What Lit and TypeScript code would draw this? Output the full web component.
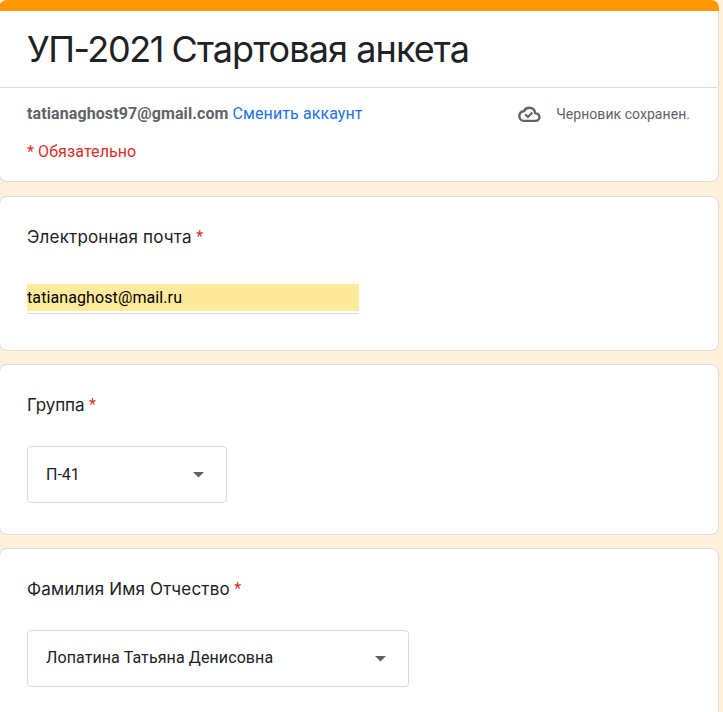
import { LitElement, html, css } from "lit";
import { customElement, property } from "lit/decorators.js";

@customElement("form-select")
class FormSelect extends LitElement {
  @property() value = "";

  static styles = css`
    :host {
      display: flex;
      align-items: center;
      justify-content: space-between;
      box-sizing: border-box;
      height: 57px;
      padding: 0 22px 0 18px;
      border: 1px solid #dadce0;
      border-radius: 4px;
      color: #202124;
      font: 400 16px/24px Roboto, sans-serif;
      letter-spacing: var(--value-spacing, 0);
    }
    span {
      padding-bottom: var(--value-lift, 0);
    }
    svg {
      display: block;
      width: 11px;
      height: 6px;
      margin-top: 1px;
      fill: #5f6368;
    }
  `;

  render() {
    return html`<span>${this.value}</span>
      <svg viewBox="0 0 11 6"><path d="M0 0h11L5.5 5.5z" /></svg>`;
  }
}

@customElement("form-question")
class FormQuestion extends LitElement {
  @property() label = "";

  static styles = css`
    :host {
      display: block;
      box-sizing: border-box;
      padding: 28px 27px 0;
      background: #fff;
      border: 1px solid #dadce0;
      border-radius: 8px;
    }
    .label {
      display: flex;
      gap: 4.5px;
      height: 24px;
      font: 400 17px/24px Inter, Roboto, sans-serif;
      letter-spacing: var(--label-spacing, 0.18px);
      color: #202124;
    }
    .star {
      font: 400 16px/24px Roboto, sans-serif;
      color: #d93025;
    }
  `;

  render() {
    return html`<div class="label">
        <span>${this.label}</span><span class="star">*</span>
      </div>
      <slot></slot>`;
  }
}

@customElement("app-root")
class AppRoot extends LitElement {
  static styles = css`
    :host {
      display: block;
      height: 712px;
      overflow: hidden;
      background: #ffefdb;
      font-family: Roboto, sans-serif;
    }
    .form {
      width: 720px;
      margin-left: -1px;
    }
    .header {
      box-sizing: border-box;
      height: 182px;
      background: #fff;
      border: 1px solid #dadce0;
      border-top: 0;
      border-radius: 8px;
    }
    .bar {
      height: 11px;
      margin: 0 -1px;
      border-radius: 8px 8px 0 0;
      background: #ff9800;
    }
    .title {
      height: 76px;
      margin: 0;
      padding-left: 27px;
      font: 400 36px/76px Inter, Roboto, sans-serif;
      letter-spacing: -0.9px;
      color: #202124;
      white-space: nowrap;
    }
    .code {
      letter-spacing: -1.45px;
    }
    .account {
      display: flex;
      align-items: center;
      height: 24px;
      margin-right: 1px;
      padding: 14px 27px 0;
      border-top: 1px solid #dadce0;
      font-size: 16px;
      line-height: 24px;
      letter-spacing: 0.1px;
      color: #5f6368;
    }
    .mail {
      font-weight: 700;
    }
    .switch {
      margin-left: 4px;
      color: #1a73e8;
    }
    .cloud {
      width: 23px;
      height: 23px;
      margin-left: auto;
      fill: none;
      stroke: #5f6368;
      stroke-linejoin: round;
    }
    .saved {
      margin-left: 15px;
      font-size: 14px;
      letter-spacing: 0.05px;
    }
    .required {
      padding: 14px 27px 0;
      font-size: 16px;
      line-height: 24px;
      letter-spacing: 0.1px;
      color: #d93025;
    }
    .email {
      height: 155px;
      margin-top: 14px;
    }
    .group {
      --label-spacing: -0.1px;
      height: 171px;
      margin-top: 13px;
    }
    .name {
      height: 190px;
      margin-top: 13px;
    }
    .field {
      width: 332px;
      margin-top: 35px;
      padding-bottom: 2px;
      border-bottom: 1px solid #dadce0;
    }
    .filled {
      height: 27px;
      background: #ffeb9b;
      color: #000;
      font-size: 16px;
      line-height: 27px;
      letter-spacing: 0.1px;
    }
    .narrow {
      width: 200px;
      margin-top: 29px;
    }
    .wide {
      --value-lift: 1px;
      --value-spacing: 0.1px;
      width: 382px;
      margin-top: 29px;
    }
  `;

  render() {
    return html`<main class="form">
      <header class="header">
        <div class="bar"></div>
        <h1 class="title"><span class="code">УП-2021 </span>Стартовая анкета</h1>
        <div class="account">
          <span class="mail">tatianaghost97@gmail.com</span>
          <span class="switch">Сменить аккаунт</span>
          <svg class="cloud" viewBox="0 0 24 24">
            <path
              stroke-width="2.5"
              d="M6 18.6h12.2a3.9 3.9 0 0 0 .5-7.8h-.7C17.6 7.3 15 5 11.7 5 9.3 5 7.3 6.3 6.2 8.6 3.3 8.9 1.4 11 1.4 13.7 1.4 16.4 3.4 18.6 6 18.6z"
            />
            <path stroke-width="2.2" stroke-linejoin="miter" d="M7.6 11.7l2.8 2.8 4.6-4.6" />
          </svg>
          <span class="saved">Черновик сохранен.</span>
        </div>
        <div class="required">* Обязательно</div>
      </header>
      <form-question class="email" label="Электронная почта">
        <div class="field"><div class="filled">tatianaghost@mail.ru</div></div>
      </form-question>
      <form-question class="group" label="Группа">
        <form-select class="narrow" value="П-41"></form-select>
      </form-question>
      <form-question class="name" label="Фамилия Имя Отчество">
        <form-select class="wide" value="Лопатина Татьяна Денисовна"></form-select>
      </form-question>
    </main>`;
  }
}
